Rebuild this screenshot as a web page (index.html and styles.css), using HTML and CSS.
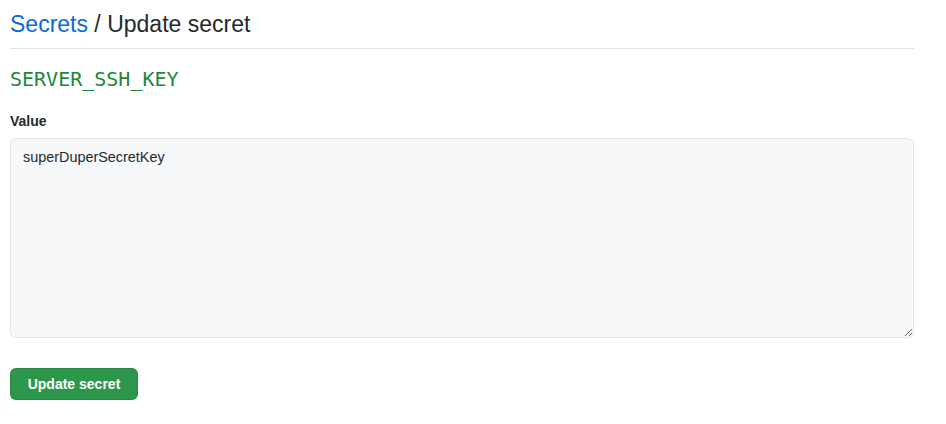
FILE: index.html
```html
<!DOCTYPE html>
<html>
<head>
<meta charset="utf-8">
<link rel="stylesheet" href="styles.css">
</head>
<body>
<div class="page">
  <div class="subhead">
    <h2 class="subhead-heading"><a class="crumb" href="#">Secrets</a> / Update secret</h2>
  </div>
  <form class="form">
    <h3 class="secret-name">SERVER_SSH_KEY</h3>
    <label class="label" for="val">Value</label>
    <textarea id="val" class="input">superDuperSecretKey</textarea>
    <button type="button" class="btn">Update secret</button>
  </form>
</div>
</body>
</html>
```
FILE: styles.css
```css
html, body {
  margin: 0;
  padding: 0;
  background: #ffffff;
}
body {
  font-family: "Liberation Sans", Arial, sans-serif;
  color: #24292e;
  font-size: 14px;
}
.page {
  padding: 6px 32px 0 10px;
}
.subhead {
  border-bottom: 1px solid #e1e4e8;
  padding-bottom: 6px;
}
.subhead-heading {
  margin: 0;
  font-size: 23px;
  font-weight: 400;
  line-height: 36px;
  color: #24292e;
}
.crumb {
  color: #0969da;
  text-decoration: none;
}
.form {
  display: flex;
  flex-direction: column;
  align-items: flex-start;
}
.secret-name {
  margin: 15px 0 0 0;
  font-family: "DejaVu Sans Mono", "Liberation Mono", monospace;
  font-weight: 400;
  font-size: 20px;
  line-height: 30px;
  color: #22863a;
}
.label {
  margin-top: 17px;
  font-weight: 700;
  font-size: 14px;
  line-height: 21px;
}
.input {
  box-sizing: border-box;
  margin-top: 6px;
  width: 100%;
  height: 200px;
  padding: 8px 12px;
  font-family: "Liberation Sans", Arial, sans-serif;
  font-size: 14.4px;
  line-height: 20px;
  color: #24292e;
  background: #f6f8fa;
  border: 1px solid #e1e4e8;
  border-radius: 6px;
  resize: vertical;
  outline: none;
}
.btn {
  margin-top: 30px;
  min-width: 128px;
  height: 32px;
  padding: 0 16px;
  font-family: "Liberation Sans", Arial, sans-serif;
  font-size: 14px;
  font-weight: 700;
  color: #ffffff;
  background: #2c974b;
  border: 1px solid rgba(27, 31, 35, 0.15);
  border-radius: 6px;
  cursor: pointer;
}
```
